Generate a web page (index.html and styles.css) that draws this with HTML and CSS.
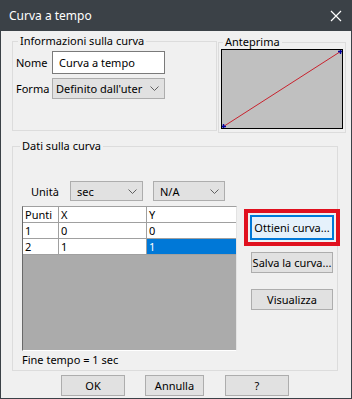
FILE: index.html
```html
<!DOCTYPE html>
<html lang="it">
<head>
    <meta charset="UTF-8">
    <title>Curva a tempo</title>
    <link rel="stylesheet" href="styles.css">
</head>
<body>
    <div class="window">
        <div class="titlebar">
            <span class="title">Curva a tempo</span>
            <svg class="close" width="12" height="12" viewBox="0 0 12 12">
                <path d="M1 1 L11 11 M11 1 L1 11" stroke="#ffffff" stroke-width="1.2" fill="none"/>
            </svg>
        </div>
        <div class="client">
            <div class="top-row">
                <fieldset class="group info">
                    <legend>Informazioni sulla curva</legend>
                    <div class="field-row first">
                        <label for="nome">Nome</label>
                        <input type="text" id="nome" class="textbox" value="Curva a tempo">
                    </div>
                    <div class="field-row second">
                        <label>Forma</label>
                        <div class="combo wide">
                            <span>Definito dall'uter</span>
                            <svg class="chev" width="9" height="5" viewBox="0 0 9 5"><path d="M0.5 0.5 L4.5 4.5 L8.5 0.5" stroke="#606060" fill="none"/></svg>
                        </div>
                    </div>
                </fieldset>
                <fieldset class="group preview">
                    <legend>Anteprima</legend>
                    <div class="preview-box">
                        <svg width="120" height="78" viewBox="0 0 120 78">
                            <line x1="1.5" y1="76.5" x2="118.5" y2="1.5" stroke="#c8101c" stroke-width="0.9"/>
                            <path d="M0 76.5 H4 M1.5 74 V78" stroke="#0000a0" stroke-width="1.4"/>
                            <path d="M116 1.5 H120 M118.5 0 V4" stroke="#0000a0" stroke-width="1.4"/>
                        </svg>
                    </div>
                </fieldset>
            </div>

            <fieldset class="group data">
                <legend>Dati sulla curva</legend>
                <div class="units-row">
                    <label>Unità</label>
                    <div class="combo unit">
                        <span>sec</span>
                        <svg class="chev" width="9" height="5" viewBox="0 0 9 5"><path d="M0.5 0.5 L4.5 4.5 L8.5 0.5" stroke="#606060" fill="none"/></svg>
                    </div>
                    <div class="combo unit second-unit">
                        <span>N/A</span>
                        <svg class="chev" width="9" height="5" viewBox="0 0 9 5"><path d="M0.5 0.5 L4.5 4.5 L8.5 0.5" stroke="#606060" fill="none"/></svg>
                    </div>
                </div>
                <div class="data-row">
                    <div class="grid-col">
                        <div class="grid">
                            <div class="grid-line header">
                                <div class="cell c-punti">Punti</div>
                                <div class="cell c-x">X</div>
                                <div class="cell c-y">Y</div>
                            </div>
                            <div class="grid-line">
                                <div class="cell c-punti">1</div>
                                <div class="cell c-x">0</div>
                                <div class="cell c-y">0</div>
                            </div>
                            <div class="grid-line">
                                <div class="cell c-punti">2</div>
                                <div class="cell c-x">1</div>
                                <div class="cell c-y selected">1</div>
                            </div>
                        </div>
                        <p class="end-time">Fine tempo = 1 sec</p>
                    </div>
                    <div class="side-buttons">
                        <div class="highlight">
                            <button class="btn default">Ottieni curva...</button>
                        </div>
                        <button class="btn side save">Salva la curva...</button>
                        <button class="btn side show">Visualizza</button>
                    </div>
                </div>
            </fieldset>

            <div class="dialog-buttons">
                <button class="btn ok">OK</button>
                <button class="btn cancel">Annulla</button>
                <button class="btn help">?</button>
            </div>
        </div>
    </div>
</body>
</html>
```

FILE: styles.css
```css
/* Reset */
* {
    margin: 0;
    padding: 0;
    box-sizing: border-box;
}

body {
    font-family: 'Noto Sans', 'Open Sans', sans-serif;
    font-size: 11px;
    color: #000000;
    background: #3b4147;
}

/* Window frame */
.window {
    width: 352px;
    height: 399px;
    background: #3b4147;
    padding: 0 1px 1px 1px;
    display: flex;
    flex-direction: column;
}

.titlebar {
    height: 31px;
    display: flex;
    align-items: center;
    justify-content: space-between;
    padding: 0 9px 0 8px;
    color: #ffffff;
}

.title {
    font-size: 12px;
}

.client {
    flex: 1;
    background: #f0f0f0;
    padding-left: 11px;
}

/* Group boxes */
.group {
    border: 1px solid #dcdcdc;
    padding: 0;
    margin: 0;
    min-width: 0;
}

.group legend {
    line-height: 14px;
    padding: 0 2px;
    margin-left: 5px;
}

.top-row {
    display: flex;
    margin-top: 3px;
}

.info {
    width: 205px;
    height: 97px;
}

.field-row {
    display: flex;
    align-items: center;
    padding-left: 3px;
}

.field-row label {
    width: 36px;
}

.field-row.first {
    margin-top: 3px;
}

.field-row.second {
    margin-top: 4px;
}

.textbox {
    width: 113px;
    height: 23px;
    border: 1px solid #7a7a7a;
    background: #ffffff;
    font-family: inherit;
    font-size: 11px;
    padding-left: 6px;
    color: #000000;
}

.combo {
    height: 21px;
    border: 1px solid #adadad;
    background: #e1e1e1;
    display: flex;
    align-items: center;
    justify-content: space-between;
    padding: 0 5px 0 3px;
    white-space: nowrap;
}

.combo.wide {
    width: 113px;
}

.chev {
    flex-shrink: 0;
}

.preview {
    width: 128px;
    height: 98px;
    margin-left: 1px;
    margin-top: 1px;
}

.preview legend {
    margin-left: 4px;
}

.preview-box {
    width: 122px;
    height: 80px;
    margin-left: 2px;
    border: 1px solid #000000;
    background: #c0c0c0;
}

.preview-box svg {
    display: block;
}

/* Curve data */
.data {
    width: 326px;
    height: 232px;
    margin-top: 6px;
}

.data legend {
    margin-left: 7px;
}

.units-row {
    display: flex;
    align-items: center;
    margin-top: 28px;
    padding-left: 18px;
}

.units-row label {
    width: 39px;
}

.combo.unit {
    width: 73px;
    height: 20px;
    padding-left: 6px;
}

.combo.second-unit {
    width: 72px;
    margin-left: 10px;
}

.data-row {
    display: flex;
    align-items: flex-start;
    margin-top: 5px;
    padding-left: 9px;
}

.grid {
    width: 215px;
    height: 145px;
    background: #ababab;
    border-top: 1px solid #a0a0a0;
    border-left: 1px solid #696969;
    border-right: 1px solid #e3e3e3;
    border-bottom: 1px solid #ffffff;
}

.grid-line {
    display: flex;
    height: 16px;
    background: #ffffff;
}

.cell {
    height: 16px;
    line-height: 15px;
    padding-left: 2px;
    border-right: 1px solid #a0a0a0;
    border-bottom: 1px solid #a0a0a0;
}

.c-punti {
    width: 36px;
}

.c-x {
    width: 88px;
}

.c-y {
    flex: 1;
    border-right: none;
}

.cell.selected {
    background: #0078d7;
    color: #ffffff;
}

.end-time {
    margin-top: 1px;
    line-height: 16px;
}

.side-buttons {
    display: flex;
    flex-direction: column;
    margin-left: 7px;
    margin-top: 3px;
}

.btn {
    font-family: inherit;
    font-size: 11px;
    color: #000000;
    background: #e1e1e1;
    border: 1px solid #adadad;
    height: 21px;
    white-space: nowrap;
}

.highlight {
    width: 96px;
    height: 37px;
    border: 4px solid #e0101e;
    padding: 2px 2px;
}

.btn.default {
    width: 84px;
    height: 25px;
    border: 2px solid #0078d7;
    background: #e5f1fb;
}

.btn.side {
    width: 82px;
    margin-left: 7px;
}

.btn.save {
    margin-top: 6px;
}

.btn.show {
    margin-top: 16px;
}

/* Bottom buttons */
.dialog-buttons {
    display: flex;
    margin-top: 4px;
    padding-left: 49px;
}

.btn.ok {
    width: 64px;
}

.btn.cancel {
    width: 59px;
    margin-left: 20px;
}

.btn.help {
    width: 64px;
    margin-left: 21px;
}
```
